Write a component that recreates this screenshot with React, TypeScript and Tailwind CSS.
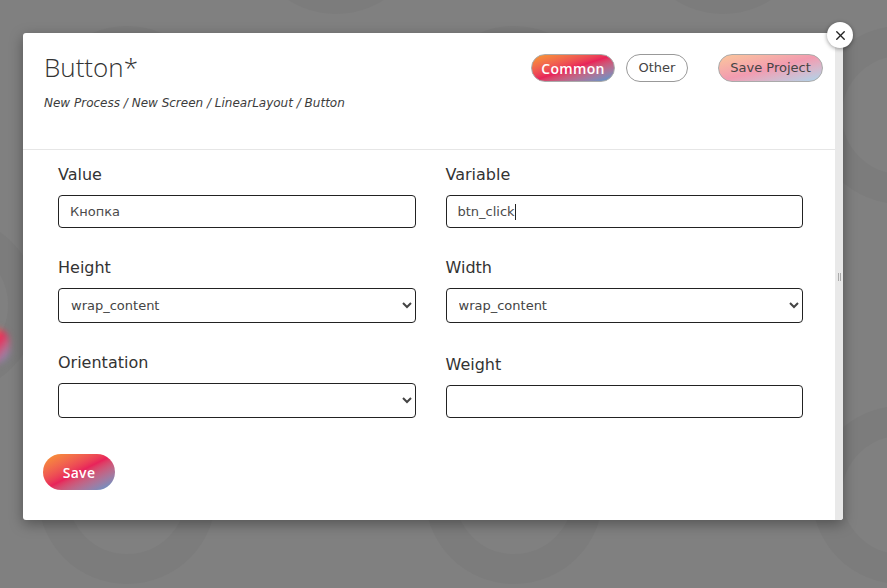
import React from "react";
import { X } from "lucide-react";

const font = { fontFamily: "'DejaVu Sans', 'Open Sans', sans-serif" };
const openSans = { fontFamily: "'Open Sans', 'Noto Sans', sans-serif" };

const Field = ({ label, children }: { label: string; children: React.ReactNode }) => (
  <div className="flex flex-col">
    <label className="mb-[8px] text-[16px] leading-[24px] text-[#333]">{label}</label>
    {children}
  </div>
);

const inputCls =
  "h-[33px] w-full rounded-[4px] border border-[#222] bg-white px-[11px] text-[13px] text-[#4a4a4a] outline-none focus:outline-none";
const selectCls =
  "h-[35px] w-full rounded-[4px] border border-[#222] bg-white px-[8px] text-[13px] text-[#444] outline-none";

// background pattern of rings (page behind the dialog)
const rings = [
  { x: -51, y: -75 }, { x: 336, y: -75 }, { x: 723, y: -75 },
  { x: 127, y: 115 }, { x: 514, y: 115 }, { x: 901, y: 115 },
  { x: -51, y: 305 }, { x: 336, y: 305 }, { x: 723, y: 305 },
  { x: 127, y: 495 }, { x: 514, y: 495 }, { x: 901, y: 495 },
  { x: -51, y: 685 }, { x: 336, y: 685 }, { x: 723, y: 685 },
];

const App: React.FC = () => {
  return (
    <div style={font} className="relative h-[588px] w-[887px] overflow-hidden bg-[#808080]">
      {rings.map((r, i) => (
        <div
          key={i}
          className="absolute h-[178px] w-[178px] rounded-full border-[30px] border-[#7c7c7c]"
          style={{ left: r.x - 89, top: r.y - 89 }}
        />
      ))}
      <div className="absolute left-[-22px] top-[328px] h-[36px] w-[32px] rounded-full bg-linear-to-br from-[#f89a2a] via-[#e8225a] to-[#3b98d4] blur-[3px]" />

      <div className="relative pl-[23px] pt-[33px]">
        <div className="flex h-[487px] w-[820px] overflow-hidden rounded-[3px] bg-white shadow-[0_4px_14px_rgba(0,0,0,0.35)]">
          <div className="flex flex-1 flex-col">
            {/* header */}
            <div className="flex h-[117px] justify-between border-b border-[#e6e6e6] pl-[21px] pr-[12px]">
              <div className="pt-[18px]">
                <h1 style={openSans} className="text-[26px] font-light leading-[32px] text-[#333]">
                  Button*
                </h1>
                <p className="mt-[12px] text-[12px] italic leading-[16px] text-[#3c3c3c]">
                  New Process / New Screen / LinearLayout / Button
                </p>
              </div>
              <div className="flex items-start pt-[21px]">
                <button
                  style={openSans}
                  className="h-[28px] w-[84px] rounded-full border border-[#aaa] bg-linear-to-br from-[#f89a2a] via-[#e8225a] to-[#3b98d4] text-[14px] font-semibold tracking-[0.3px] text-white"
                >
                  Common
                </button>
                <button className="ml-[11px] h-[28px] w-[62px] rounded-full border border-[#999] bg-white text-[13px] text-[#444]">
                  Other
                </button>
                <button className="ml-[30px] h-[28px] w-[105px] rounded-full border border-[#aaa] bg-linear-to-br from-[#fbc79a] via-[#f29bb0] to-[#a9d5ec] text-[13px] text-[#444]">
                  Save Project
                </button>
              </div>
            </div>

            {/* form */}
            <div className="grid grid-cols-2 items-end gap-x-[30px] gap-y-[28px] pl-[35px] pr-[32px] pt-[13px]">
              <Field label="Value">
                <input className={inputCls} defaultValue="Кнопка" />
              </Field>
              <Field label="Variable">
                <div className="relative">
                  <input className={inputCls} defaultValue="btn_click" />
                  {/* text caret */}
                  <div className="pointer-events-none absolute inset-0 flex items-center px-[12px] text-[13px]">
                    <span className="text-transparent">btn_click</span>
                    <span className="h-[16px] w-[1px] bg-[#222]" />
                  </div>
                </div>
              </Field>
              <Field label="Height">
                <select className={selectCls} defaultValue="wrap_content">
                  <option>wrap_content</option>
                  <option>match_parent</option>
                </select>
              </Field>
              <Field label="Width">
                <select className={selectCls} defaultValue="wrap_content">
                  <option>wrap_content</option>
                  <option>match_parent</option>
                </select>
              </Field>
              <Field label="Orientation">
                <select className={selectCls} defaultValue="">
                  <option value=""></option>
                  <option>vertical</option>
                  <option>horizontal</option>
                </select>
              </Field>
              <Field label="Weight">
                <input className={inputCls} />
              </Field>
            </div>

            <div className="pl-[20px] pt-[36px]">
              <button
                style={openSans}
                className="h-[36px] w-[72px] rounded-full bg-linear-to-br from-[#f89a2a] via-[#e8225a] to-[#3b98d4] text-[14px] font-semibold tracking-[0.3px] text-white"
              >
                Save
              </button>
            </div>
          </div>

          {/* scrollbar strip */}
          <div className="flex w-[8px] items-center justify-center bg-[#e9e9e9]">
            <div className="flex gap-[1px]">
              <span className="h-[8px] w-[1px] bg-[#aaa]" />
              <span className="h-[8px] w-[1px] bg-[#aaa]" />
            </div>
          </div>
        </div>

        {/* close button */}
        <button className="absolute left-[827px] top-[22px] flex h-[26px] w-[26px] items-center justify-center rounded-full bg-white shadow-[0_1px_4px_rgba(0,0,0,0.4)]">
          <X size={15} strokeWidth={2.2} className="text-[#222]" />
        </button>
      </div>
    </div>
  );
};

export default App;
